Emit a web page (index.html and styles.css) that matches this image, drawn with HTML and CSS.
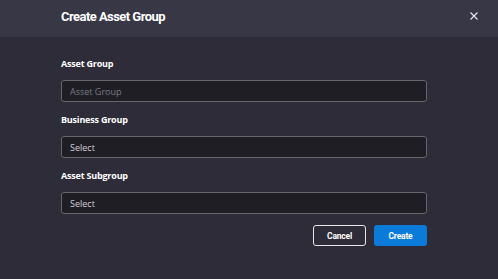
FILE: index.html
```html
<!DOCTYPE html>
<html>
<head>
<meta charset="utf-8">
<link rel="stylesheet" href="styles.css">
</head>
<body>
<div class="modal">
  <div class="header">
    <div class="title">Create Asset Group</div>
    <button class="close" aria-label="Close">
      <svg width="8" height="8" viewBox="0 0 8 8"><path d="M0.5 0.5L7.5 7.5M7.5 0.5L0.5 7.5" stroke="#e4e4ea" stroke-width="1.2" fill="none"/></svg>
    </button>
  </div>
  <div class="body">
    <div class="field">
      <label class="label">Asset Group</label>
      <input class="input" placeholder="Asset Group">
    </div>
    <div class="field">
      <label class="label">Business Group</label>
      <div class="input select">Select</div>
    </div>
    <div class="field">
      <label class="label">Asset Subgroup</label>
      <div class="input select">Select</div>
    </div>
    <div class="actions">
      <button class="btn cancel">Cancel</button>
      <button class="btn create">Create</button>
    </div>
  </div>
</div>
</body>
</html>
```
FILE: styles.css
```css
* { box-sizing: border-box; }
html, body { margin: 0; padding: 0; height: 100%; }
body { background: #2d2c38; font-family: "Open Sans", "Noto Sans", sans-serif; }
.modal { width: 498px; height: 279px; background: #2d2c38; }
.header {
  height: 37px;
  background: #383746;
  display: flex;
  align-items: center;
  justify-content: space-between;
  padding: 0 20px 0 61px;
}
.title {
  font-family: Roboto, "Liberation Sans", sans-serif;
  font-weight: 700;
  font-size: 13px;
  letter-spacing: -0.55px;
  color: #ffffff;
  margin-top: -5px;
}
.close {
  background: none; border: 0; padding: 0; width: 8px; height: 8px;
  display: flex; margin-top: -5px;
}
.body { padding: 20px 71px 0 61px; display: flex; flex-direction: column; }
.field { display: flex; flex-direction: column; margin-bottom: 11px; }
.label {
  font-weight: 700;
  font-size: 9px;
  line-height: 13px;
  height: 15px;
  color: #ffffff;
  letter-spacing: -0.2px;
  margin-bottom: 8px;
}
.input {
  height: 22px;
  width: 100%;
  background: #1e1e24;
  border: 1px solid #66666d;
  border-radius: 3px;
  padding: 0 8px;
  font-family: "Open Sans", "Noto Sans", sans-serif;
  font-size: 9px;
  color: #d0d0d6;
  outline: none;
}
.input::placeholder { color: #7c7c84; }
.select { display: flex; align-items: center; }
.actions { display: flex; justify-content: flex-end; gap: 8px; }
.btn {
  width: 53px; height: 21px;
  border-radius: 3px;
  font-family: Roboto, "Liberation Sans", sans-serif;
  font-weight: 700;
  font-size: 8.5px;
  letter-spacing: -0.2px;
  color: #ffffff;
  padding: 0;
}
.cancel { background: transparent; border: 1px solid #e6e6ea; }
.create { background: #0a7bd8; border: 0; }
```
